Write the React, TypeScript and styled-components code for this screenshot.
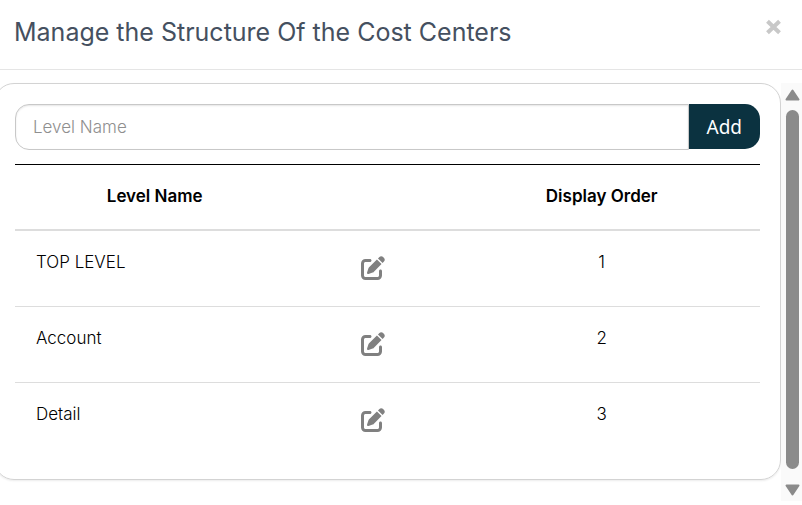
import React, { useState } from "react";
import styled, { createGlobalStyle } from "styled-components";
import { FaPenToSquare } from "react-icons/fa6";

const GlobalStyle = createGlobalStyle`
  *, *::before, *::after { box-sizing: border-box; }
  html { height: 100%; }
  body {
    margin: 0;
    height: 100%;
    overflow: hidden;
    background: #fff;
    color: #000;
    font-family: Inter, "Liberation Sans", sans-serif;
    font-size: 17px;
    line-height: 22px;
  }
  #root { height: 100%; }
`;

const Dialog = styled.section`
  display: flex;
  flex-direction: column;
  height: 100%;
`;

const Header = styled.header`
  display: flex;
  justify-content: space-between;
  align-items: flex-start;
  padding: 17px 20px 22px 14px;
  border-bottom: 1px solid #e5e5e5;
`;

const Title = styled.h1`
  margin: 0;
  color: #455060;
  font-size: 25px;
  line-height: 30px;
  font-weight: 400;
`;

const CloseButton = styled.button`
  display: flex;
  margin: 2px 0 0;
  padding: 0;
  border: 0;
  background: none;
  cursor: pointer;
`;

const Body = styled.div`
  display: flex;
  flex: 1;
  min-height: 0;
  padding: 13px 0 4px;
`;

const Panel = styled.div`
  flex: 1;
  align-self: flex-start;
  margin-left: -6px;
  padding: 20px;
  border: 1px solid #d3d3d3;
  border-radius: 20px;
  box-shadow: 0 1px 2px rgba(0, 0, 0, 0.08);
`;

const AddForm = styled.form`
  display: flex;
  height: 46px;
  margin-bottom: 14px;
`;

const LevelInput = styled.input`
  flex: 1;
  min-width: 0;
  padding: 0 17px;
  border: 1px solid #c8c8c8;
  border-radius: 14px 0 0 14px;
  box-shadow: inset 0 1px 2px rgba(0, 0, 0, 0.1);
  outline: 0;
  background: #fff;
  font: 300 17px/22px Inter, "Liberation Sans", sans-serif;
  &::placeholder { color: #8f8f8f; opacity: 1; }
`;

const AddButton = styled.button`
  height: 45px;
  padding: 0 18px 0 17px;
  border: 0;
  border-radius: 0 15px 15px 0;
  background: #0b3240;
  color: #fff;
  font: 400 19px/24px "Noto Sans", "Open Sans", sans-serif;
  cursor: pointer;
`;

const Table = styled.table`
  width: 100%;
  table-layout: fixed;
  border-collapse: separate;
  border-spacing: 0;
  border-top: 1px solid #000;
`;

const Column = styled.col<{ $width: string }>`
  width: ${(p) => p.$width};
`;

const HeadCell = styled.th`
  height: 66px;
  padding: 0 0 2px;
  border-bottom: 2px solid #ddd;
  font-weight: 600;
`;

const Cell = styled.td<{ $align?: "left" | "center" }>`
  height: 76px;
  padding: 20px 21px;
  vertical-align: top;
  text-align: ${(p) => p.$align ?? "left"};
  font-weight: 300;
  border-bottom: 1px solid #ddd;
  tr:last-child > & { border-bottom: 0; }
`;

const EditButton = styled.button`
  display: inline-flex;
  margin: 5px 0 0 8px;
  padding: 0;
  border: 0;
  background: none;
  color: #808080;
  cursor: pointer;
`;

const Scroller = styled.div`
  display: flex;
  flex-direction: column;
  align-items: center;
  width: 21px;
  padding: 6px 0 5px 2px;
  background: #fafafa;
`;

const ScrollArrow = styled.button`
  display: flex;
  padding: 0;
  border: 0;
  background: none;
`;

const Thumb = styled.div`
  flex: 1;
  width: 13px;
  margin: 9px 0 15px;
  border-radius: 7px;
  background: #8b8b8b;
`;

const levels = [
  { name: "TOP LEVEL", order: 1 },
  { name: "Account", order: 2 },
  { name: "Detail", order: 3 },
];

export default function App() {
  const [name, setName] = useState("");

  return (
    <>
      <GlobalStyle />
      <Dialog role="dialog" aria-labelledby="dialog-title">
        <Header>
          <Title id="dialog-title">Manage the Structure Of the Cost Centers</Title>
          <CloseButton type="button" aria-label="Close">
            <svg width="17" height="16" viewBox="0 0 17 16">
              <path d="M2.5 2.2 14.5 13.8M14.5 2.2 2.5 13.8" stroke="#c8c8c8" strokeWidth="4" />
            </svg>
          </CloseButton>
        </Header>
        <Body>
          <Panel>
            <AddForm onSubmit={(e) => e.preventDefault()}>
              <LevelInput
                aria-label="Level Name"
                placeholder="Level Name"
                value={name}
                onChange={(e) => setName(e.target.value)}
              />
              <AddButton type="submit">Add</AddButton>
            </AddForm>
            <Table>
              <colgroup>
                <Column $width="37.5%" />
                <Column $width="20%" />
                <Column $width="42.5%" />
              </colgroup>
              <thead>
                <tr>
                  <HeadCell scope="col">Level Name</HeadCell>
                  <HeadCell />
                  <HeadCell scope="col">Display Order</HeadCell>
                </tr>
              </thead>
              <tbody>
                {levels.map((level) => (
                  <tr key={level.name}>
                    <Cell>{level.name}</Cell>
                    <Cell $align="center">
                      <EditButton type="button" aria-label={`Edit ${level.name}`}>
                        <FaPenToSquare size={24} />
                      </EditButton>
                    </Cell>
                    <Cell $align="center">{level.order}</Cell>
                  </tr>
                ))}
              </tbody>
            </Table>
          </Panel>
          <Scroller>
            <ScrollArrow type="button" aria-label="Scroll up">
              <svg width="15" height="12" viewBox="0 0 15 12">
                <path d="M7.5 1.5 13.5 10.5H1.5Z" fill="#8b8b8b" stroke="#8b8b8b" strokeWidth="2" strokeLinejoin="round" />
              </svg>
            </ScrollArrow>
            <Thumb />
            <ScrollArrow type="button" aria-label="Scroll down">
              <svg width="15" height="12" viewBox="0 0 15 12">
                <path d="M7.5 10.5 1.5 1.5H13.5Z" fill="#8b8b8b" stroke="#8b8b8b" strokeWidth="2" strokeLinejoin="round" />
              </svg>
            </ScrollArrow>
          </Scroller>
        </Body>
      </Dialog>
    </>
  );
}
